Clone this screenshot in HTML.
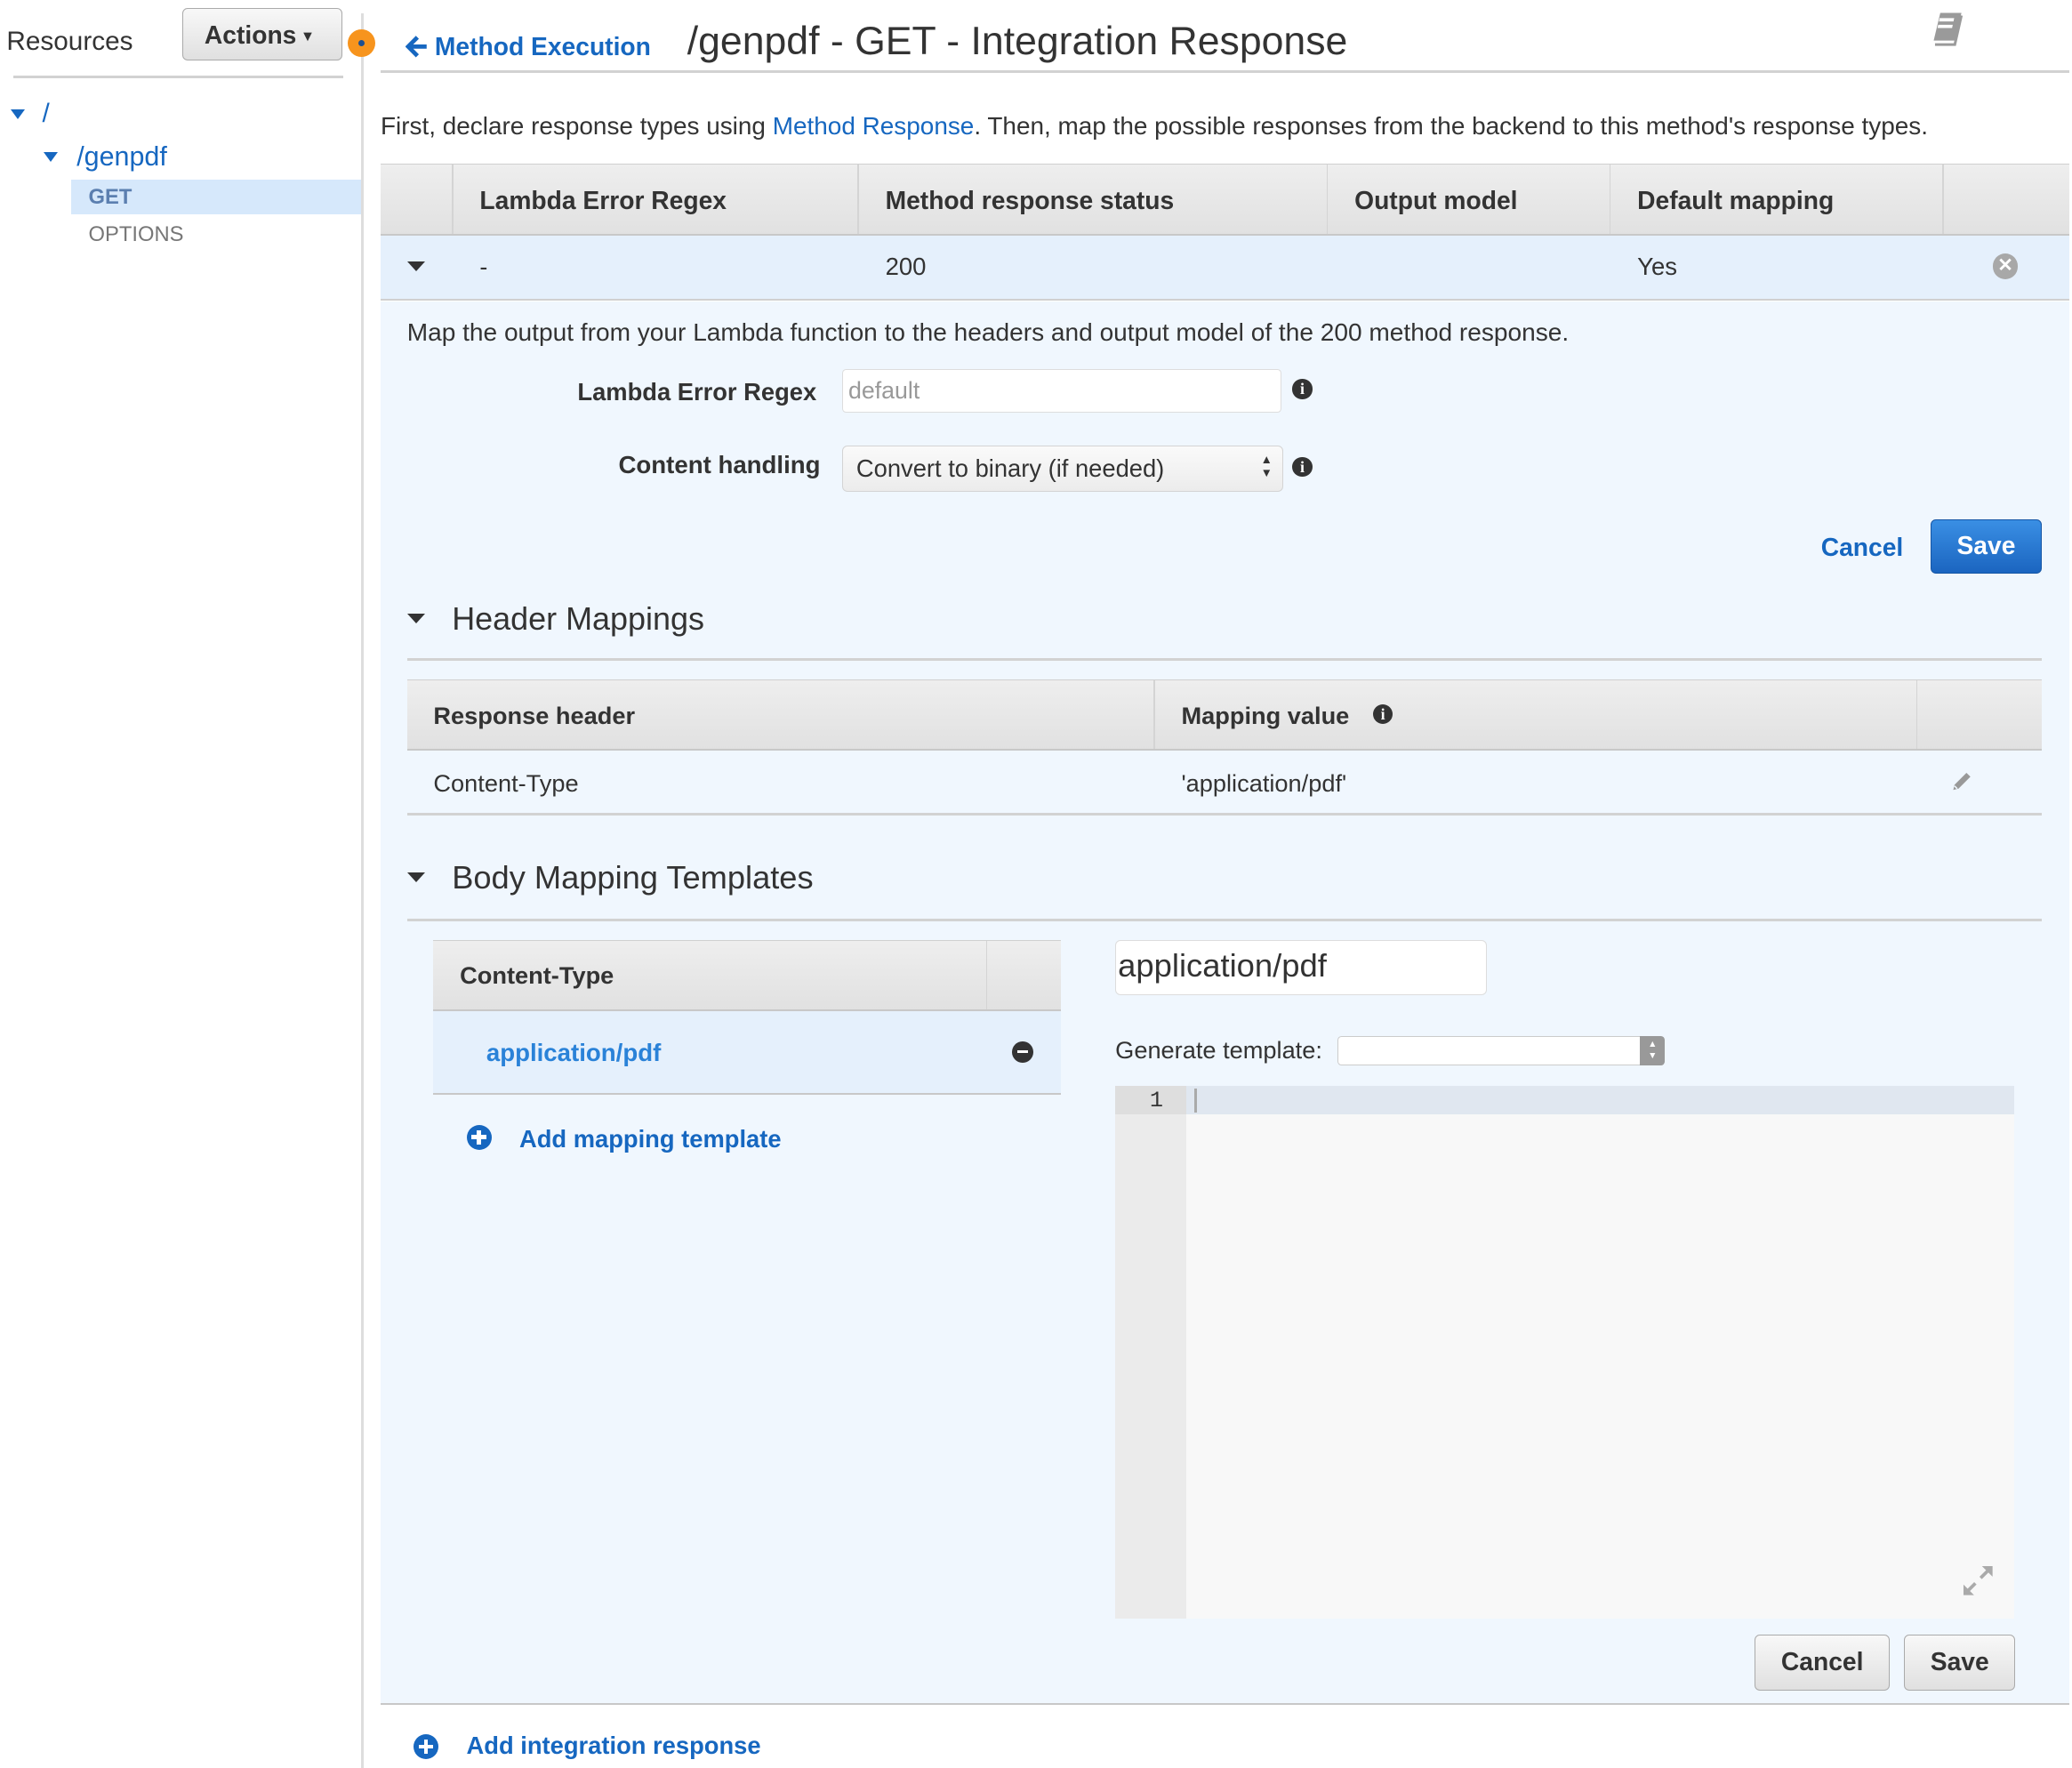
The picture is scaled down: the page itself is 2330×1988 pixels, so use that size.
<!DOCTYPE html>
<html><head><meta charset="utf-8"><style>
html,body{margin:0;padding:0;background:#fff;overflow:hidden;width:2330px;height:1988px}
#w{position:absolute;left:0;top:0;width:1568px;height:1338px;zoom:1.486;font-family:"Liberation Sans",Arial,sans-serif;color:#333}
.a{position:absolute;white-space:nowrap}
.b{font-weight:bold}
.blue{color:#1667c0}
.th{background:linear-gradient(#eeeeee,#e1e1e1);border-top:1px solid #d0d0d0;border-bottom:2px solid #c8c8c8;position:absolute}
.sep{position:absolute;top:0;bottom:0;width:1px;background:#d4d4d4}
.tri{position:absolute;width:0;height:0;border-left:7px solid transparent;border-right:7px solid transparent;border-top:8px solid #333}
.btn{position:absolute;border:1px solid #aaa;border-radius:4px;background:linear-gradient(#f8f8f8,#e0e0e0);font-weight:bold;font-size:19px;text-align:center;color:#333;box-sizing:border-box}
.info{position:absolute;width:15px;height:15px;border-radius:50%;background:#333;color:#fff;font:bold 12px/15px "Liberation Serif",serif;text-align:center}
.hr{position:absolute;height:2px;background:#d2d2d2}
</style></head><body><div id="w">
<!-- sidebar -->
<div class="a" style="left:273px;top:10px;width:2px;height:1328px;background:#ddd"></div>
<div class="a" style="left:5px;top:20px;font-size:20px">Resources</div>
<div class="btn" style="left:138px;top:6px;width:121px;height:40px;line-height:40px;padding-right:4px">Actions<span style="font-size:11px;position:relative;top:-2px"> ▼</span></div>
<div class="a" style="left:263px;top:22px;width:21px;height:21px;border-radius:50%;background:#f7941d"></div>
<div class="a" style="left:271px;top:30px;width:5px;height:5px;border-radius:50%;background:#1d4f91"></div>
<div class="hr" style="left:10px;top:57px;width:250px"></div>
<div class="tri" style="left:8px;top:83px;border-top-color:#1667c0;border-left-width:6px;border-right-width:6px"></div>
<div class="a blue" style="left:32px;top:75px;font-size:20px">/</div>
<div class="tri" style="left:33px;top:115px;border-top-color:#1667c0;border-left-width:6px;border-right-width:6px"></div>
<div class="a blue" style="left:58px;top:107px;font-size:20.5px">/genpdf</div>
<div class="a" style="left:54px;top:136px;width:219px;height:26px;background:#d6e8fb"></div>
<div class="a b" style="left:67px;top:140px;font-size:16px;color:#5b7fb0">GET</div>
<div class="a" style="left:67px;top:168px;font-size:16px;color:#777">OPTIONS</div>
<!-- header -->
<svg class="a" style="left:307px;top:26px" width="18" height="18" viewBox="0 0 18 18"><path d="M9 2L2 9l7 7M2 9h14" stroke="#1667c0" stroke-width="3.2" fill="none"/></svg>
<div class="a b blue" style="left:329px;top:24px;font-size:19px">Method Execution</div>
<div class="a" style="left:520px;top:15px;font-size:30px;color:#333">/genpdf - GET - Integration Response</div>
<svg class="a" style="left:1460px;top:7px" width="30" height="30" viewBox="0 0 30 30"><path d="M8 3h16l-5 21H3z" fill="#9a9a9a"/><path d="M24 5l-5 22H4" stroke="#9a9a9a" stroke-width="2" fill="none"/><rect x="9" y="7" width="11" height="2.5" fill="#fff" transform="skewX(-12)"/><rect x="9" y="12" width="11" height="2.5" fill="#fff" transform="skewX(-12)"/></svg>
<div class="hr" style="left:288px;top:53px;width:1278px"></div>
<div class="a" style="left:288px;top:85px;font-size:18.8px">First, declare response types using <span class="blue">Method Response</span>. Then, map the possible responses from the backend to this method's response types.</div>
<!-- main table -->
<div class="th" style="left:288px;top:124px;width:1278px;height:52px">
<div class="sep" style="left:54px"></div><div class="sep" style="left:361px"></div><div class="sep" style="left:716px"></div><div class="sep" style="left:930px"></div><div class="sep" style="left:1182px"></div>
<div class="a b" style="left:75px;top:16px;font-size:19px">Lambda Error Regex</div>
<div class="a b" style="left:382px;top:16px;font-size:19px">Method response status</div>
<div class="a b" style="left:737px;top:16px;font-size:19px">Output model</div>
<div class="a b" style="left:951px;top:16px;font-size:19px">Default mapping</div>
</div>
<div class="a" style="left:288px;top:178px;width:1278px;height:48px;background:#e5f0fc;border-bottom:2px solid #d0d0d0"></div>
<div class="tri" style="left:308px;top:198px"></div>
<div class="a" style="left:363px;top:192px;font-size:18px">-</div>
<div class="a" style="left:670px;top:191px;font-size:18.5px">200</div>
<div class="a" style="left:1239px;top:191px;font-size:18.5px">Yes</div>
<div class="a" style="left:1508px;top:192px;width:19px;height:19px;border-radius:50%;background:#a8a8a8;color:#fff;font:bold 14px/19px 'Liberation Sans';text-align:center">✕</div>
<!-- expanded panel -->
<div class="a" style="left:288px;top:228px;width:1278px;height:1061px;background:#f0f7fe;border-bottom:2px solid #c8c8c8"></div>
<div class="a" style="left:308px;top:241px;font-size:18.9px">Map the output from your Lambda function to the headers and output model of the 200 method response.</div>
<div class="a b" style="left:437px;top:286px;font-size:18.4px">Lambda Error Regex</div>
<div class="a" style="left:637px;top:279px;width:333px;height:33px;background:#fff;border:1px solid #ddd;border-radius:3px;box-sizing:border-box"></div>
<div class="a" style="left:642px;top:285px;font-size:18px;color:#999">default</div>
<div class="info" style="left:978px;top:287px">i</div>
<div class="a b" style="left:468px;top:341px;font-size:18.6px">Content handling</div>
<div class="a" style="left:637px;top:337px;width:334px;height:35px;background:linear-gradient(#fafafa,#ececec);border:1px solid #d4d4d4;border-radius:4px;box-sizing:border-box"></div>
<div class="a" style="left:648px;top:344px;font-size:18.4px">Convert to binary (if needed)</div>
<div class="a" style="left:954px;top:343px;font-size:9px;line-height:10px">▲<br>▼</div>
<div class="info" style="left:978px;top:346px">i</div>
<div class="a b blue" style="left:1378px;top:403px;font-size:19px">Cancel</div>
<div class="a b" style="left:1461px;top:393px;width:84px;height:41px;border-radius:4px;background:linear-gradient(#3a8fe4,#1b65c0);border:1px solid #1656a5;box-sizing:border-box;color:#fff;font-size:19px;line-height:39px;text-align:center">Save</div>
<div class="tri" style="left:308px;top:464px"></div>
<div class="a" style="left:342px;top:454px;font-size:24.2px">Header Mappings</div>
<div class="hr" style="left:308px;top:498px;width:1237px"></div>
<div class="th" style="left:308px;top:514px;width:1237px;height:52px">
<div class="sep" style="left:565px"></div><div class="sep" style="left:1142px"></div>
<div class="a b" style="left:20px;top:16px;font-size:18.3px">Response header</div>
<div class="a b" style="left:586px;top:16px;font-size:18.3px">Mapping value</div>
<div class="info" style="left:731px;top:18px">i</div>
</div>
<div class="a" style="left:328px;top:582px;font-size:18.3px">Content-Type</div>
<div class="a" style="left:894px;top:582px;font-size:18.3px">'application/pdf'</div>
<svg class="a" style="left:1475px;top:583px" width="18" height="18" viewBox="0 0 18 18"><path d="M13 2l3 3-9 9-4 1 1-4z" fill="#999"/><path d="M4 12l2 2" stroke="#f0f7fe" stroke-width="1"/></svg>
<div class="hr" style="left:308px;top:615px;width:1237px"></div>
<div class="tri" style="left:308px;top:660px"></div>
<div class="a" style="left:342px;top:650px;font-size:24.4px">Body Mapping Templates</div>
<div class="hr" style="left:308px;top:695px;width:1237px"></div>
<div class="th" style="left:328px;top:711px;width:475px;height:52px">
<div class="sep" style="left:418px"></div>
<div class="a b" style="left:20px;top:16px;font-size:18.3px">Content-Type</div>
</div>
<div class="a" style="left:328px;top:765px;width:475px;height:62px;background:#e5f0fc;border-bottom:2px solid #c8c8c8"></div>
<div class="a b" style="left:368px;top:786px;font-size:18.6px;color:#2a82d8">application/pdf</div>
<div class="a" style="left:766px;top:788px;width:16px;height:16px;border-radius:50%;background:#333"><div style="position:absolute;left:4px;top:7px;width:8px;height:2px;background:#fff"></div></div>
<div class="a" style="left:353px;top:851px;width:19px;height:19px;border-radius:50%;background:#1667c0"><div style="position:absolute;left:4px;top:8px;width:11px;height:3px;background:#fff"></div><div style="position:absolute;left:8px;top:4px;width:3px;height:11px;background:#fff"></div></div>
<div class="a b blue" style="left:393px;top:851px;font-size:18.4px">Add mapping template</div>
<div class="a" style="left:844px;top:711px;width:281px;height:42px;background:#fff;border:1px solid #ddd;border-radius:4px;box-sizing:border-box"></div>
<div class="a" style="left:846px;top:717px;font-size:24.5px">application/pdf</div>
<div class="a" style="left:844px;top:784px;font-size:18.3px">Generate template:</div>
<div class="a" style="left:1012px;top:784px;width:248px;height:22px;background:#fff;border:1px solid #ccc;border-radius:3px;box-sizing:border-box"></div>
<div class="a" style="left:1241px;top:784px;width:19px;height:22px;background:#999;border-radius:0 3px 3px 0;color:#fff;font-size:7px;line-height:9px;text-align:center;padding-top:2px;box-sizing:border-box">▲<br>▼</div>
<div class="a" style="left:844px;top:822px;width:680px;height:403px;background:#f8f8f8"></div>
<div class="a" style="left:844px;top:822px;width:54px;height:403px;background:#ebebeb"></div>
<div class="a" style="left:898px;top:822px;width:626px;height:21px;background:#e0e7f0"></div>
<div class="a" style="left:844px;top:822px;width:54px;height:21px;background:#dedede"></div>
<div class="a" style="left:870px;top:823px;font:17px 'Liberation Mono',monospace">1</div>
<div class="a" style="left:904px;top:824px;width:2px;height:18px;background:#aaa"></div>
<svg class="a" style="left:1484px;top:1183px" width="26" height="26" viewBox="0 0 26 26"><path d="M3 23l8-8M23 3l-8 8" stroke="#aaa" stroke-width="2.5"/><path d="M2 16v8h8zM24 10V2h-8z" fill="#aaa"/></svg>
<div class="btn" style="left:1328px;top:1237px;width:102px;height:42px;line-height:40px">Cancel</div>
<div class="btn" style="left:1441px;top:1237px;width:84px;height:42px;line-height:40px">Save</div>
<div class="a" style="left:313px;top:1312px;width:19px;height:19px;border-radius:50%;background:#1667c0"><div style="position:absolute;left:4px;top:8px;width:11px;height:3px;background:#fff"></div><div style="position:absolute;left:8px;top:4px;width:3px;height:11px;background:#fff"></div></div>
<div class="a b blue" style="left:353px;top:1310px;font-size:18.4px">Add integration response</div>
</div></body></html>
